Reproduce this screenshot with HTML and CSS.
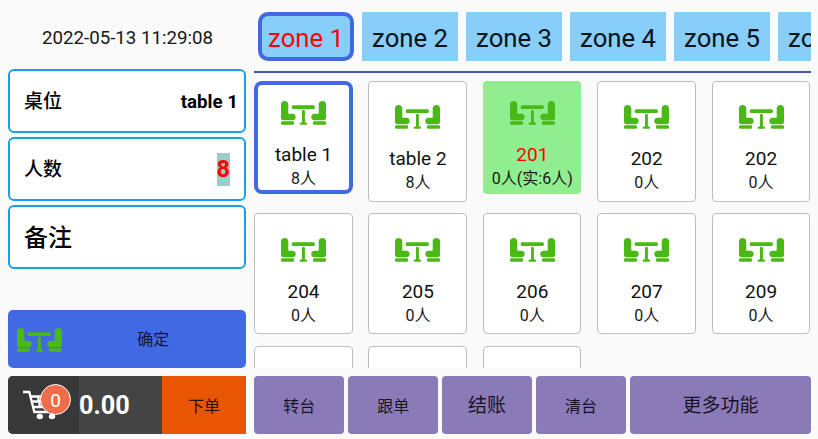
FILE: index.html
```
<!DOCTYPE html>
<html lang="zh-CN">
<head>
<meta charset="utf-8">
<title>桌位</title>
<link rel="stylesheet" href="styles.css">
</head>
<body>
<svg class="defs" width="0" height="0" aria-hidden="true">
  <symbol id="dining" viewBox="0 0 45 24">
    <g id="chair"><path d="M0 3.500C0 1.200 1.400 0 3.600 0S7.300 1.200 7.300 3.500V12.700h4.200c4.300 0 4.300 6.500 0 6.500H2.500C.8 19.200 0 18.200 0 16.800z"/><rect y="20.200" width="13" height="3.600" rx="1.200"/></g>
    <use href="#chair" transform="matrix(-1 0 0 1 45 0)"/>
    <rect x="10.700" y="4.300" width="23.200" height="3.700" rx="1.500"/>
    <path d="M21 10c0-1.300 2.900-1.300 2.900 0v11.500h1c1.700 0 1.700 2.300 0 2.300h-5c-1.700 0-1.700-2.300 0-2.300h1.100z"/>
  </symbol>
</svg>
<main class="app">
  <aside class="side">
    <time class="clock">2022-05-13 11:29:08</time>
    <div class="fields">
      <div class="field"><span>桌位</span><b class="value">table 1</b></div>
      <div class="field"><span>人数</span><b class="count">8</b></div>
      <div class="field note"><span>备注</span></div>
    </div>
    <button class="confirm"><svg class="dining"><use href="#dining"/></svg><span>确定</span></button>
    <div class="cart">
      <div class="basket">
        <svg class="trolley" viewBox="0 0 40 30"><path d="M0 2h6.300l5 20h22M8 6.500h26l-3 10.500H11M9 11.500h23M15 6.500l2 10.500M22 6.500v10.500" fill="none" stroke="#fff" stroke-width="2.300"/><ellipse cx="16.800" cy="26.500" rx="3.200" ry="2.800" fill="#fff"/><ellipse cx="29" cy="26.500" rx="3.200" ry="2.800" fill="#fff"/></svg>
        <span class="badge">0</span>
      </div>
      <b class="total">0.00</b>
      <button class="order">下单</button>
    </div>
  </aside>
  <section class="content">
    <nav class="zones">
      <button class="zone active">zone 1</button><button class="zone">zone 2</button><button class="zone">zone 3</button><button class="zone">zone 4</button><button class="zone">zone 5</button><button class="zone">zone 6</button>
    </nav>
    <div class="tables">
      <div class="card selected"><svg class="dining"><use href="#dining"/></svg><span class="name">table 1</span><span class="people">8人</span></div>
      <div class="card"><svg class="dining"><use href="#dining"/></svg><span class="name">table 2</span><span class="people">8人</span></div>
      <div class="card busy"><svg class="dining"><use href="#dining"/></svg><span class="name">201</span><span class="people">0人(实:6人)</span></div>
      <div class="card"><svg class="dining"><use href="#dining"/></svg><span class="name">202</span><span class="people">0人</span></div>
      <div class="card"><svg class="dining"><use href="#dining"/></svg><span class="name">202</span><span class="people">0人</span></div>
      <div class="card"><svg class="dining"><use href="#dining"/></svg><span class="name">204</span><span class="people">0人</span></div>
      <div class="card"><svg class="dining"><use href="#dining"/></svg><span class="name">205</span><span class="people">0人</span></div>
      <div class="card"><svg class="dining"><use href="#dining"/></svg><span class="name">206</span><span class="people">0人</span></div>
      <div class="card"><svg class="dining"><use href="#dining"/></svg><span class="name">207</span><span class="people">0人</span></div>
      <div class="card"><svg class="dining"><use href="#dining"/></svg><span class="name">209</span><span class="people">0人</span></div>
      <div class="card"></div>
      <div class="card"></div>
      <div class="card"></div>
    </div>
    <div class="actions">
      <button>转台</button><button>跟单</button><button class="large">结账</button><button>清台</button><button class="large more">更多功能</button>
    </div>
  </section>
</main>
</body>
</html>
```
FILE: styles.css
```
* { box-sizing: border-box; }
body {
  margin: 0;
  background: #fafafa;
  color: #000;
  font-family: Roboto, "Noto Sans CJK SC", sans-serif;
  overflow: hidden;
}
button { border: 0; padding: 0; margin: 0; font: inherit; color: inherit; }
.defs { position: absolute; }
.app {
  display: grid;
  grid-template-columns: 238px 557px;
  gap: 8px;
  width: 818px;
  height: 439px;
  padding: 0 7px 5px 8px;
}
.side, .content { display: flex; flex-direction: column; min-width: 0; height: 434px; }
.clock { height: 69px; padding-top: 7px; padding-left: 1px; line-height: 62px; text-align: center; font-size: 18.7px; color: #171717; }
.fields { display: flex; flex-direction: column; gap: 4px; }
.field {
  display: flex;
  align-items: center;
  justify-content: space-between;
  height: 64px;
  padding: 0 6px 0 14px;
  border: 2px solid #16a0e9;
  border-radius: 6px;
  background: #fff;
  font-size: 19px;
  font-weight: 500;
}
.field span { padding-bottom: 3px; }
.value { padding-top: 1px; font-weight: 700; font-size: 18.7px; }
.count { margin-right: 8px; background: #9bcec9; color: #f00; font-size: 23.500px; line-height: 33px; font-weight: 700; }
.note { font-size: 24px; }
.note span { padding-bottom: 4px; }
.confirm {
  display: flex;
  align-items: center;
  height: 58px;
  margin-top: 41px;
  padding-left: 8.500px;
  border-radius: 5px;
  background: #4169e1;
  font-size: 16px;
}
.confirm span { flex: 1; text-align: center; padding: 0 1px 2px 0; color: #101a38; }
.dining { width: 45px; height: 24px; flex: none; fill: #4ab815; }
.confirm .dining { margin-top: 2px; }
.cart { display: flex; height: 58px; margin-top: 8px; border-radius: 5px 0 0 5px; overflow: hidden; background: #444; }
.basket { position: relative; width: 71px; background: #383838; }
.trolley { display: block; width: 40px; height: 30px; margin: 13.500px 0 0 15px; }
.badge {
  position: absolute;
  left: 32px;
  top: 8px;
  width: 31px;
  height: 31px;
  border: 1px solid #fff;
  border-radius: 50%;
  background: #ef6e49;
  color: #fff;
  font-size: 19px;
  line-height: 31px;
  text-align: center;
}
.total { width: 83px; color: #fff; font-size: 25.300px; line-height: 60px; }
.order { flex: 1; background: #ea5504; padding-bottom: 1px; font-size: 16px; color: #241006; }
.zones { display: flex; gap: 8px; height: 73px; padding: 12px 0 0 4px; border-bottom: 2px solid #4a58a9; overflow: hidden; }
.zone { flex: 0 0 96px; height: 49px; background: #87cefa; font-size: 25.700px; line-height: 52px; white-space: nowrap; color: #08131a; }
.zone.active { border: 4px solid #4169e1; border-radius: 10px; color: #f00; line-height: 44px; }
.tables {
  display: grid;
  grid-template-columns: repeat(5, 98.500px);
  column-gap: 15.900px;
  grid-auto-rows: 121px;
  row-gap: 11.700px;
  align-items: start;
  height: 295px;
  padding-top: 7.700px;
  overflow: hidden;
}
.card {
  display: flex;
  flex-direction: column;
  align-items: center;
  height: 121px;
  padding: 23.700px 0 0 .6px;
  border: 1px solid #bdbdbd;
  border-radius: 4px;
  background: #fff;
}
.selected { height: 113px; padding-top: 16.500px; border: 4px solid #4169e1; border-radius: 8px; }
.busy { height: 113px; padding-top: 20.500px; border: 0; background: #90ee90; }
.name { margin-top: 19px; font-size: 19px; line-height: 22px; color: #101010; }
.people { font-size: 16px; line-height: 24px; margin-top: 1px; white-space: nowrap; color: #171717; }
.busy .name { color: #f00; }
.actions { display: flex; gap: 3.700px; height: 58px; margin-top: 8px; }
.actions button { flex: 0 0 90.300px; padding-bottom: 1px; border-radius: 4px; background: #8b7ab8; font-size: 16px; color: #17141f; }
.actions .large { font-size: 19px; padding-bottom: 3px; }
.actions .more { flex: 1 1 0; }
```
